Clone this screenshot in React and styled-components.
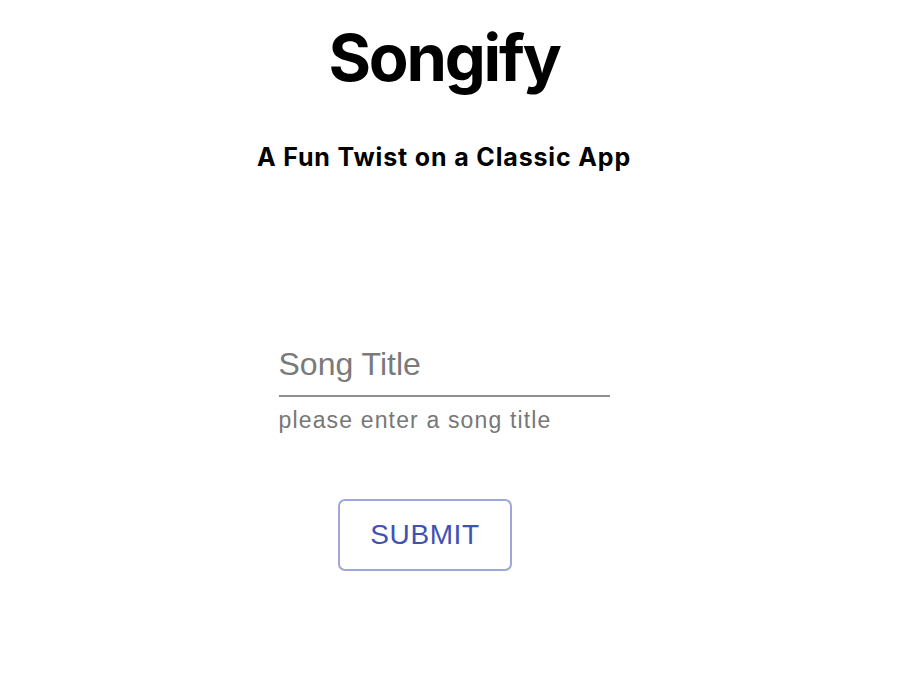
import styled, { createGlobalStyle } from "styled-components";

const GlobalStyle = createGlobalStyle`
  body {
    margin: 0;
    background: #ffffff;
    font-family: "Liberation Sans", Arial, sans-serif;
  }
`;

const Page = styled.div`
  width: 888px;
  display: flex;
  flex-direction: column;
  align-items: center;
`;

const Title = styled.h1`
  font-family: Inter, "Liberation Sans", sans-serif;
  font-size: 65px;
  font-weight: 700;
  color: #000;
  margin: 18px 0 0;
  line-height: 80px;
  letter-spacing: -2.2px;
`;

const Subtitle = styled.h3`
  font-family: Inter, "Liberation Sans", sans-serif;
  font-size: 25px;
  font-weight: 700;
  color: #000;
  margin: 44px 0 0;
  line-height: 30px;
  letter-spacing: 0.85px;
`;

const Field = styled.div`
  width: 331px;
  margin-top: 174px;
  display: flex;
  flex-direction: column;
`;

const Input = styled.input`
  border: none;
  border-bottom: 2px solid #8f8f8f;
  outline: none;
  padding: 0 0 12px;
  font-family: "Liberation Sans", Arial, sans-serif;
  font-size: 32px;
  color: #333;
  background: transparent;
  &::placeholder {
    color: #7a7a7a;
  }
`;

const Helper = styled.p`
  margin: 10px 0 0;
  font-size: 23px;
  color: #777;
  letter-spacing: 1.15px;
`;

const Button = styled.button`
  margin: 65px 38px 0 0;
  width: 174px;
  height: 72px;
  border: 2px solid #9ea6dc;
  border-radius: 7px;
  background: #fff;
  color: #3f51b5;
  font-family: "Liberation Sans", Arial, sans-serif;
  font-size: 28px;
  letter-spacing: 0.6px;
  text-transform: uppercase;
  cursor: pointer;
`;

export default function App() {
  return (
    <>
      <GlobalStyle />
      <Page>
        <Title>Songify</Title>
        <Subtitle>A Fun Twist on a Classic App</Subtitle>
        <Field>
          <Input placeholder="Song Title" />
          <Helper>please enter a song title</Helper>
        </Field>
        <Button>Submit</Button>
      </Page>
    </>
  );
}
